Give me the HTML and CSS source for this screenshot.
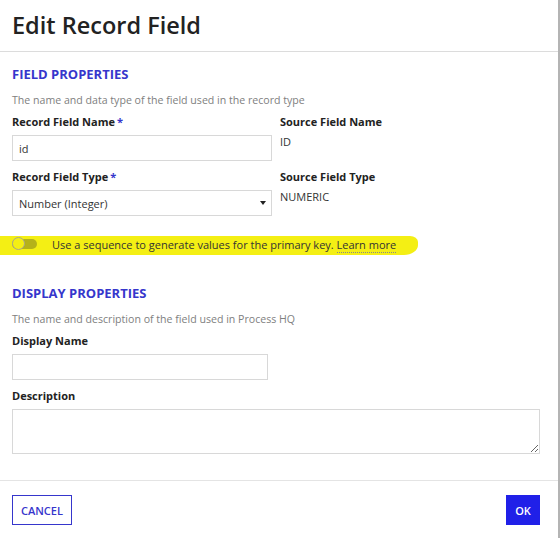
FILE: index.html
```html
<!DOCTYPE html>
<html lang="en">
<head>
  <meta charset="UTF-8" />
  <title>Edit Record Field</title>
  <link rel="stylesheet" href="styles.css">
</head>
<body>

  <div class="dialog">
    <div class="dialog-header">
      <h1>Edit Record Field</h1>
    </div>

    <div class="dialog-body">
      <h2 class="section-title">FIELD PROPERTIES</h2>
      <p class="section-desc">The name and data type of the field used in the record type</p>

      <div class="field-grid">
        <div class="field">
          <label>Record Field Name<span class="req">*</span></label>
          <input type="text" class="text-input" value="id">
        </div>
        <div class="field">
          <label>Source Field Name</label>
          <div class="readonly">ID</div>
        </div>
        <div class="field">
          <label>Record Field Type<span class="req">*</span></label>
          <div class="select">
            <span>Number (Integer)</span>
            <span class="caret"></span>
          </div>
        </div>
        <div class="field">
          <label>Source Field Type</label>
          <div class="readonly">NUMERIC</div>
        </div>
      </div>

      <div class="toggle-row">
        <div class="marker"></div>
        <span class="toggle"><span class="knob"></span></span>
        <span class="toggle-text">Use a sequence to generate values for the primary key. <a href="#" class="learn">Learn more</a></span>
      </div>

      <h2 class="section-title">DISPLAY PROPERTIES</h2>
      <p class="section-desc">The name and description of the field used in Process HQ</p>

      <div class="field">
        <label>Display Name</label>
        <input type="text" class="text-input short">
      </div>
      <div class="field">
        <label>Description</label>
        <textarea class="text-area"></textarea>
      </div>
    </div>

    <div class="dialog-footer">
      <button class="btn btn-secondary">CANCEL</button>
      <button class="btn btn-primary">OK</button>
    </div>
  </div>

</body>
</html>
```

FILE: styles.css
```css
body {
  margin: 0;
  font-family: 'Open Sans', sans-serif;
  background: #fff;
  color: #222;
}

.dialog {
  width: 558px;
  height: 538px;
  border-right: 2px solid #b4b4b4;
  display: flex;
  flex-direction: column;
}

.dialog-header {
  padding: 9px 12px 10px;
  border-bottom: 1px solid #dcdcdc;
}

.dialog-header h1 {
  margin: 0;
  font-size: 23.5px;
  font-weight: 600;
  line-height: 32px;
  color: #222;
}

.dialog-body {
  padding: 13px 12px 0;
  flex: 1;
}

.section-title {
  margin: 0;
  font-size: 13px;
  font-weight: 700;
  color: #3636cc;
  line-height: 18px;
}

.section-desc {
  margin: 9px 0 6px;
  font-size: 10.6px;
  color: #808080;
  line-height: 16px;
}

.field-grid {
  display: grid;
  grid-template-columns: 260px 1fr;
  column-gap: 8px;
}

.field {
  margin-bottom: 8px;
}

.field label {
  display: block;
  font-size: 11px;
  font-weight: 700;
  color: #222;
  line-height: 16px;
  margin-bottom: 5px;
}

.req {
  color: #3636cc;
  margin-left: 2px;
}

.text-input {
  box-sizing: border-box;
  display: block;
  width: 260px;
  height: 26px;
  border: 1px solid #d8d8d8;
  padding: 0 6px;
  font-family: inherit;
  font-size: 11px;
  color: #333;
  outline: none;
}

.text-input.short {
  width: 256px;
}

.readonly {
  font-size: 11px;
  color: #333;
  line-height: 16px;
  margin-top: -1px;
}

.select {
  box-sizing: border-box;
  width: 260px;
  height: 26px;
  border: 1px solid #d8d8d8;
  padding: 0 5px 0 6px;
  font-size: 11px;
  color: #333;
  display: flex;
  align-items: center;
  justify-content: space-between;
}

.caret {
  width: 0;
  height: 0;
  border-left: 3.5px solid transparent;
  border-right: 3.5px solid transparent;
  border-top: 4px solid #222;
}

.toggle-row {
  position: relative;
  display: flex;
  align-items: center;
  height: 24px;
  margin: 8px 0 28px;
  font-size: 11px;
  color: #333;
}

/* highlighter stroke behind the row */
.marker {
  position: absolute;
  left: -12px;
  top: 4px;
  width: 418px;
  height: 19px;
  background: #f4ef14;
  border-radius: 0 8px 14px 0 / 0 6px 10px 0;
}

.toggle {
  position: relative;
  width: 25px;
  height: 10px;
  border-radius: 5px;
  background: #b5b21a;
}

.knob {
  position: absolute;
  left: 0;
  top: -2px;
  width: 13px;
  height: 13px;
  border-radius: 50%;
  background: #f4ef14;
  border: 1px solid #a8a690;
  box-sizing: border-box;
}

.toggle-text {
  position: relative;
  margin-left: 15px;
}

.learn {
  color: #333;
  text-decoration: none;
  border-bottom: 1px dotted #888;
}

.text-area {
  box-sizing: border-box;
  display: block;
  width: 528px;
  height: 45px;
  border: 1px solid #d8d8d8;
  resize: vertical;
  font-family: inherit;
  outline: none;
}

.dialog-footer {
  border-top: 1px solid #e4e4e4;
  padding: 14px 18px 0 12px;
  display: flex;
  justify-content: space-between;
  align-items: flex-start;
  height: 58px;
  box-sizing: border-box;
}

.btn {
  font-family: inherit;
  font-size: 11px;
  font-weight: 600;
  height: 30px;
  padding: 0 8px;
  cursor: pointer;
}

.btn-secondary {
  background: #fff;
  color: #3636cc;
  border: 1px solid #3636cc;
}

.btn-primary {
  background: #2020e8;
  color: #fff;
  border: 1px solid #2020e8;
  width: 34px;
  padding: 0;
}
```
